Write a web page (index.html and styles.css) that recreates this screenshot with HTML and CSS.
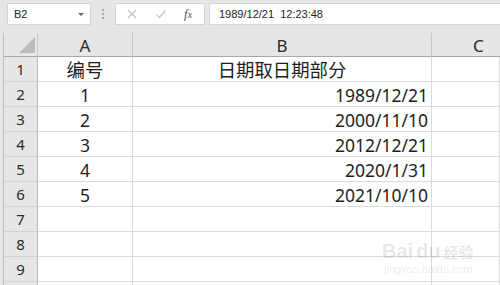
FILE: index.html
```html
<!DOCTYPE html>
<html lang="zh-CN">
<head>
<meta charset="utf-8">
<title>Excel</title>
<link rel="stylesheet" href="styles.css">
</head>
<body>
<div class="toolbar">
  <div class="namebox"><span>B2</span><span class="drop"></span></div>
  <div class="grip"><i></i><i></i><i></i></div>
  <div class="fxbox">
    <svg class="ico" width="12" height="12" viewBox="0 0 12 12"><path d="M2 2 L10 10 M10 2 L2 10" stroke="#c4c4c4" stroke-width="1.3" fill="none"/></svg>
    <svg class="ico" width="12" height="12" viewBox="0 0 12 12"><path d="M1.5 6.5 L4.5 9.5 L10.5 2.5" stroke="#c4c4c4" stroke-width="1.3" fill="none"/></svg>
    <span class="fx"><i>f</i><i class="x">x</i></span>
  </div>
  <div class="formula">1989/12/21&nbsp;&nbsp;12:23:48</div>
</div>
<div class="sheet">
  <div class="corner"><span class="tri"></span></div>
  <div class="colh">A</div>
  <div class="colh">B</div>
  <div class="colh last">C</div>

  <div class="rowh">1</div>
  <div class="cell center cjk">编号</div>
  <div class="cell center cjk">日期取日期部分</div>
  <div class="cell"></div>

  <div class="rowh">2</div>
  <div class="cell center">1</div>
  <div class="cell right">1989/12/21</div>
  <div class="cell"></div>

  <div class="rowh">3</div>
  <div class="cell center">2</div>
  <div class="cell right">2000/11/10</div>
  <div class="cell"></div>

  <div class="rowh">4</div>
  <div class="cell center">3</div>
  <div class="cell right">2012/12/21</div>
  <div class="cell"></div>

  <div class="rowh">5</div>
  <div class="cell center">4</div>
  <div class="cell right">2020/1/31</div>
  <div class="cell"></div>

  <div class="rowh">6</div>
  <div class="cell center">5</div>
  <div class="cell right">2021/10/10</div>
  <div class="cell"></div>

  <div class="rowh">7</div>
  <div class="cell"></div>
  <div class="cell"></div>
  <div class="cell"></div>

  <div class="rowh">8</div>
  <div class="cell"></div>
  <div class="cell"></div>
  <div class="cell"></div>

  <div class="rowh">9</div>
  <div class="cell"></div>
  <div class="cell"></div>
  <div class="cell"></div>

  <div class="rowh partial"></div>
  <div class="cell partial"></div>
  <div class="cell partial"></div>
  <div class="cell partial"></div>
</div>
<div class="watermark">
  <div class="wm-top"><span>Bai</span><span class="du">du</span><span class="jy">经验</span></div>
  <div class="wm-url">jingyan.baidu.com</div>
</div>
</body>
</html>
```
FILE: styles.css
```css
html, body {
  margin: 0;
  padding: 0;
}
body {
  width: 500px;
  height: 285px;
  overflow: hidden;
  background: #e6e6e6;
  font-family: "Noto Sans", "Noto Sans CJK SC", sans-serif;
  color: #222;
  position: relative;
}
.toolbar {
  height: 33px;
  box-sizing: border-box;
  padding-top: 3px;
  display: flex;
  align-items: flex-start;
}
.namebox {
  margin-left: 7px;
  width: 84px;
  height: 22px;
  box-sizing: border-box;
  background: #fff;
  border: 1px solid #d6d6d6;
  display: flex;
  align-items: center;
  justify-content: space-between;
  padding: 0 6px 0 6px;
  font-family: "Liberation Sans", sans-serif;
  font-size: 11px;
  color: #222;
}
.drop {
  width: 0;
  height: 0;
  border-left: 3px solid transparent;
  border-right: 3px solid transparent;
  border-top: 3px solid #666;
}
.grip {
  margin-left: 11px;
  width: 2px;
  height: 22px;
  display: flex;
  flex-direction: column;
  justify-content: center;
  gap: 2px;
}
.grip i {
  display: block;
  width: 2px;
  height: 2px;
  background: #a8a8a8;
}
.fxbox {
  margin-left: 11px;
  width: 90px;
  height: 22px;
  box-sizing: border-box;
  background: #fff;
  border: 1px solid #d6d6d6;
  display: flex;
  align-items: center;
  padding-left: 10px;
  gap: 17px;
}
.fx {
  font-family: "Liberation Serif", serif;
  font-size: 13px;
  color: #555;
}
.fx .x {
  font-size: 10px;
}
.formula {
  margin-left: 4px;
  flex: 1;
  height: 22px;
  box-sizing: border-box;
  background: #fff;
  border: 1px solid #d6d6d6;
  border-right: none;
  padding-left: 9px;
  display: flex;
  align-items: center;
  font-family: "Liberation Sans", sans-serif;
  font-size: 11px;
  color: #222;
}
.sheet {
  margin-left: 3px;
  border-left: 1px solid #c0c0c0;
  display: grid;
  grid-template-columns: 34px 95px 299px 68px;
  grid-template-rows: 24px repeat(9, 25px) 4px;
  background: #fff;
}
.corner, .colh {
  background: #e6e6e6;
  border-bottom: 1px solid #a8a8a8;
}
.corner {
  border-right: 1px solid #c8c8c8;
  position: relative;
}
.tri {
  position: absolute;
  right: 2px;
  bottom: 3px;
  width: 0;
  height: 0;
  border-left: 16px solid transparent;
  border-bottom: 16px solid #bcbcbc;
}
.colh {
  border-right: 1px solid #c8c8c8;
  display: flex;
  align-items: center;
  justify-content: center;
  font-size: 17px;
  line-height: 1;
  color: #2a2a2a;
  padding-top: 1px;
}
.colh.last {
  border-right: none;
  justify-content: flex-start;
  padding-left: 41px;
}
.rowh {
  background: #e6e6e6;
  border-right: 1px solid #bdbdbd;
  border-bottom: 1px solid #d4d4d4;
  display: flex;
  align-items: center;
  justify-content: center;
  font-size: 15px;
  line-height: 1;
  color: #2a2a2a;
  padding-top: 1px;
}
.cell {
  border-right: 1px solid #dadada;
  border-bottom: 1px solid #dadada;
  display: flex;
  align-items: flex-end;
  padding: 0 3px 2px 3px;
  font-size: 17.5px;
  line-height: 1;
  white-space: nowrap;
  overflow: hidden;
  color: #1e1e1e;
}
.partial {
  padding: 0;
  border-bottom: none;
}
.center {
  justify-content: center;
}
.right {
  justify-content: flex-end;
}
.cjk {
  font-size: 18.4px;
}
.watermark {
  position: absolute;
  left: 382px;
  top: 240px;
  color: rgba(0, 0, 0, 0.1);
  font-family: "Liberation Sans", sans-serif;
}
.wm-top {
  font-size: 20px;
  font-weight: bold;
  line-height: 22px;
  display: flex;
  align-items: baseline;
}
.wm-top .du {
  margin-left: 3px;
}
.wm-top .jy {
  font-family: "Noto Sans CJK SC", sans-serif;
  font-size: 15px;
  margin-left: 3px;
}
.wm-url {
  font-size: 11px;
  line-height: 12px;
  margin-left: 2px;
}
```
